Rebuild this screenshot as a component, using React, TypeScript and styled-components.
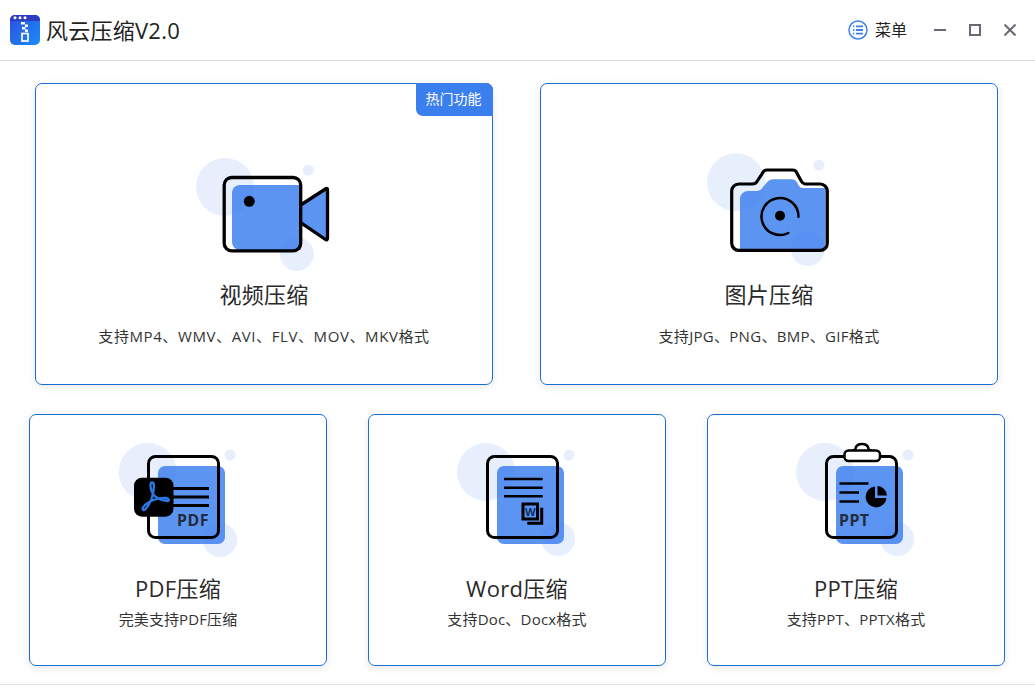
import React from 'react';
import styled, { createGlobalStyle } from 'styled-components';

const FONT = '"Open Sans", "Noto Sans CJK SC", "Liberation Sans", sans-serif';

const Global = createGlobalStyle`
  html, body { margin: 0; padding: 0; background: #fff; }
  body { font-family: ${FONT}; overflow: hidden; }
  * { box-sizing: border-box; }
`;

const Page = styled.div`
  width: 1035px;
  height: 690px;
  background: #fff;
`;

const Header = styled.header`
  height: 61px;
  border-bottom: 1px solid #dcdcdc;
  display: flex;
  align-items: center;
  padding: 0 19px 0 10px;
`;

const Brand = styled.div`
  display: flex;
  align-items: center;
  gap: 6px;
  flex: 1;
`;

const AppName = styled.span`
  font-size: 22px;
  line-height: 30px;
  letter-spacing: 0.25px;
  color: #222;
`;

const MenuButton = styled.div`
  display: flex;
  align-items: center;
  gap: 7px;
  font-size: 16px;
  line-height: 22px;
  color: #222;
  margin-right: 27px;
`;

const WindowButtons = styled.div`
  display: flex;
  align-items: center;
  gap: 23px;
`;

const Main = styled.main`
  height: 624px;
  border-bottom: 1px solid #e0e0e0;
  padding-top: 22px;
`;

const TopRow = styled.div`
  display: grid;
  grid-template-columns: 458px 458px;
  gap: 47px;
  padding-left: 35px;
`;

const BottomRow = styled.div`
  display: grid;
  grid-template-columns: 298px 298px 298px;
  gap: 41px;
  padding-left: 29px;
  margin-top: 29px;
`;

const Card = styled.div<{ $large?: boolean }>`
  position: relative;
  height: ${p => (p.$large ? '302px' : '252px')};
  padding-top: ${p => (p.$large ? '61px' : '20px')};
  background: #fff;
  border: 1px solid #1a6fd4;
  border-radius: 7px;
  box-shadow: 0 2px 8px rgba(0, 0, 0, 0.09);
  display: flex;
  flex-direction: column;
  align-items: center;
`;

const Badge = styled.div`
  position: absolute;
  top: -1px;
  right: -1px;
  width: 77px;
  height: 33px;
  padding-right: 2px;
  background: #3b7fee;
  color: #fff;
  border-radius: 0 7px 0 7px;
  font-size: 14px;
  line-height: 31px;
  text-align: center;
`;

const IconArt = styled.svg`
  display: block;
  flex: none;
`;

const Title = styled.div<{ $large?: boolean }>`
  font-size: 22px;
  line-height: 30px;
  letter-spacing: 0.3px;
  color: #2a2a2a;
  margin-top: ${p => (p.$large ? '-1px' : '8px')};
`;

const Subtitle = styled.div<{ $large?: boolean; $track?: number }>`
  font-size: 15px;
  line-height: 20px;
  letter-spacing: ${p => p.$track ?? 0.2}px;
  color: #333;
  margin-top: ${p => (p.$large ? '17px' : '6px')};
`;

const BLUE = 'rgba(56,124,238,0.82)';
const HALO = 'rgba(60,120,235,0.12)';

const Halos = ({ big, small, low }: { big: number[]; small: number[]; low: number[] }) => (
  <>
    <circle cx={big[0]} cy={big[1]} r={29} fill={HALO} />
    <circle cx={small[0]} cy={small[1]} r={5.5} fill={HALO} />
    <circle cx={low[0]} cy={low[1]} r={17} fill={HALO} />
  </>
);

const Logo = () => (
  <svg width="30" height="30" viewBox="10 15 30 30">
    <defs>
      <linearGradient id="lg" x1="0" y1="0" x2="1" y2="1">
        <stop offset="0" stopColor="#2a4ee0" />
        <stop offset="1" stopColor="#1d8ef5" />
      </linearGradient>
    </defs>
    <rect x="10" y="15" width="30" height="30" rx="5" fill="url(#lg)" />
    <path d="M10 21 V20 a5 5 0 0 1 5 -5 H35 a5 5 0 0 1 5 5 V21 Z" fill="#2e3bc4" />
    <circle cx="15" cy="17.8" r="1.5" fill="#fff" />
    <circle cx="20" cy="17.8" r="1.5" fill="#fff" />
    <circle cx="25" cy="17.8" r="1.5" fill="#fff" />
    <rect x="21" y="22" width="4" height="2.5" fill="#fff" />
    <rect x="25" y="24.5" width="3" height="2.5" fill="#fff" />
    <rect x="22" y="27" width="3.5" height="2.5" fill="#fff" />
    <rect x="25" y="29.5" width="3" height="2.5" fill="#fff" />
    <rect x="22" y="33.5" width="6" height="7.5" fill="none" stroke="#fff" strokeWidth="1.7" />
  </svg>
);

const MenuIcon = () => (
  <svg width="20" height="20" viewBox="0 0 20 20" fill="none">
    <circle cx="10" cy="10" r="9" stroke="#3b82f0" strokeWidth="1.5" />
    <path d="M8 6.3 H15 M8 10 H15 M8 13.7 H15" stroke="#3b82f0" strokeWidth="1.8" />
    <path d="M5 6.3 H6.4 M5 10 H6.4 M5 13.7 H6.4" stroke="#3b82f0" strokeWidth="1.8" />
  </svg>
);

const WinMin = () => (
  <svg width="12" height="12" viewBox="0 0 12 12"><path d="M0 6 H12" stroke="#6b6875" strokeWidth="2" /></svg>
);
const WinMax = () => (
  <svg width="12" height="12" viewBox="0 0 12 12"><rect x="1" y="1" width="10" height="10" fill="none" stroke="#6b6875" strokeWidth="2" /></svg>
);
const WinClose = () => (
  <svg width="12" height="12" viewBox="0 0 12 12"><path d="M0.5 0.5 L11.5 11.5 M11.5 0.5 L0.5 11.5" stroke="#6b6875" strokeWidth="2" /></svg>
);

const VideoIcon = () => (
  <IconArt width="160" height="135" viewBox="184 145 160 135">
    <Halos big={[225, 187]} small={[308.3, 170]} low={[296.7, 254]} />
    <path d="M232 193 a8 8 0 0 1 8 -8 H301 V250 H240 a8 8 0 0 1 -8 -8 Z" fill={BLUE} />
    <path d="M300.7 205 L326.2 188.5 Q327.5 188 327.5 190 V238 Q327.5 240.5 325.5 239.5 L300.7 222.7 Z" fill={BLUE} stroke="#000" strokeWidth="3.3" strokeLinejoin="round" />
    <path d="M300.7 205 V185 a7.5 7.5 0 0 0 -7.5 -7.5 H231.7 a7.5 7.5 0 0 0 -7.5 7.5 V243.3 a7.5 7.5 0 0 0 7.5 7.5 H293.2 a7.5 7.5 0 0 0 7.5 -7.5 V222.7" fill="none" stroke="#000" strokeWidth="3.3" />
    <circle cx="249.3" cy="201.3" r="5.5" fill="#000" />
  </IconArt>
);

const CameraIcon = () => (
  <IconArt width="160" height="135" viewBox="689 145 160 135">
    <Halos big={[736, 182.3]} small={[819, 165]} low={[807.7, 249]} />
    <path d="M740 199 a8 8 0 0 1 8 -8 H756 q5 0 7 -4 l2.5 -3 q3 -4.7 8 -4.7 H792 q3 0 5 3 l2 3.7 q1 2 4 2 H825.7 V242 a8 8 0 0 1 -8 8 H740 Z" fill={BLUE} />
    <path d="M738.7 184 H752.5 q3 0 4.5 -2.5 l6.5 -10 q1 -1.5 3 -1.5 H793 q2 0 3 1.5 l5.5 10 q1.2 2 3.5 2.5 H820.3 a7 7 0 0 1 7 7 V243.3 a7 7 0 0 1 -7 7 H738.7 a7 7 0 0 1 -7 -7 V191 a7 7 0 0 1 7 -7 Z" fill="none" stroke="#000" strokeWidth="3.2" strokeLinejoin="round" />
    <path d="M798.5 216.7 A18.5 18.5 0 1 0 788.3 233" fill="none" stroke="#000" strokeWidth="2.5" strokeLinecap="round" />
    <circle cx="780" cy="215.7" r="5" fill="#000" />
  </IconArt>
);

const PdfIcon = () => (
  <IconArt width="140" height="130" viewBox="108 435 140 130">
    <Halos big={[147.7, 472]} small={[230, 455]} low={[220, 540]} />
    <rect x="158" y="466" width="67" height="78" rx="7" fill={BLUE} />
    <rect x="148.5" y="456.5" width="70" height="81" rx="7" fill="none" stroke="#000" strokeWidth="3" />
    <path d="M173 488.5 H209 M173 497 H209 M173 505.5 H209" stroke="#000" strokeWidth="2.8" />
    <text x="177" y="526" fontFamily='"Noto Sans", sans-serif' fontWeight="700" fontSize="16" letterSpacing="0.5" fill="#222c3c">PDF</text>
    <rect x="134" y="477.7" width="39.5" height="39" rx="8" fill="#000" />
    <path d="M152 482.5 C150 482.5 150 487 152 492 C154 497 160 500 167 501 C170 501.5 169 498 166 498 C158 497.5 150 501 145 505 C141 509 143 511 145 509.5 C150 505 154 495 154 486 C154 483.5 153.5 482.5 152 482.5 Z" fill="none" stroke="#2a78e4" strokeWidth="2.3" strokeLinejoin="round" />
  </IconArt>
);

const WordIcon = () => (
  <IconArt width="140" height="130" viewBox="447 435 140 130">
    <Halos big={[486, 472]} small={[569, 455]} low={[558, 539]} />
    <rect x="497" y="466" width="67" height="78" rx="7" fill={BLUE} />
    <rect x="487.5" y="456.5" width="70" height="81" rx="7" fill="none" stroke="#000" strokeWidth="3" />
    <path d="M504 479 H542.7 M504 487.7 H542.7 M504 496.3 H542.7" stroke="#000" strokeWidth="2.5" />
    <rect x="523" y="504" width="14.5" height="15" fill="none" stroke="#000" strokeWidth="3" />
    <path d="M541.7 507.7 V523.3 H527.3" fill="none" stroke="#000" strokeWidth="3" />
    <text x="530.2" y="516" textAnchor="middle" fontFamily='"Noto Sans", sans-serif' fontWeight="700" fontSize="11" fill="#0c2a5c">W</text>
  </IconArt>
);

const PptIcon = () => (
  <IconArt width="140" height="130" viewBox="786 435 140 130">
    <Halos big={[825, 472]} small={[908, 455]} low={[897, 539]} />
    <rect x="836" y="466" width="67" height="78" rx="7" fill={BLUE} />
    <rect x="826.5" y="456.5" width="70" height="81" rx="7" fill="none" stroke="#000" strokeWidth="3" />
    <path d="M852 450.5 q3 0 3.5 -2 q1 -4.500 6.500 -4.500 q5.500 0 6.500 4.500 q0.500 2 3.500 2" fill="#fff" stroke="#000" strokeWidth="2.5" />
    <rect x="844.500" y="450.5" width="35.500" height="10.500" rx="4" fill="#fff" stroke="#000" strokeWidth="2.5" />
    <path d="M839.5 483.5 H868.5 M839.5 492.5 H859 M839.5 501.5 H859" stroke="#000" strokeWidth="2.6" />
    <path d="M875 486.5 A10.5 10.5 0 1 0 886.5 498 H875 Z" fill="#000" />
    <path d="M877.5 486 A10 10 0 0 1 887 495.5 H877.5 Z" fill="#000" />
    <text x="839" y="526" fontFamily='"Noto Sans", sans-serif' fontWeight="700" fontSize="16" letterSpacing="0.5" fill="#222c3c">PPT</text>
  </IconArt>
);

export default function App() {
  return (
    <Page>
      <Global />
      <Header>
        <Brand>
          <Logo />
          <AppName>风云压缩V2.0</AppName>
        </Brand>
        <MenuButton>
          <MenuIcon />
          菜单
        </MenuButton>
        <WindowButtons>
          <WinMin />
          <WinMax />
          <WinClose />
        </WindowButtons>
      </Header>
      <Main>
        <TopRow>
          <Card $large>
            <Badge>热门功能</Badge>
            <VideoIcon />
            <Title $large>视频压缩</Title>
            <Subtitle $large $track={0.6}>支持MP4、WMV、AVI、FLV、MOV、MKV格式</Subtitle>
          </Card>
          <Card $large>
            <CameraIcon />
            <Title $large>图片压缩</Title>
            <Subtitle $large $track={0.3}>支持JPG、PNG、BMP、GIF格式</Subtitle>
          </Card>
        </TopRow>
        <BottomRow>
          <Card>
            <PdfIcon />
            <Title>PDF压缩</Title>
            <Subtitle $track={0.1}>完美支持PDF压缩</Subtitle>
          </Card>
          <Card>
            <WordIcon />
            <Title>Word压缩</Title>
            <Subtitle>支持Doc、Docx格式</Subtitle>
          </Card>
          <Card>
            <PptIcon />
            <Title>PPT压缩</Title>
            <Subtitle>支持PPT、PPTX格式</Subtitle>
          </Card>
        </BottomRow>
      </Main>
    </Page>
  );
}
